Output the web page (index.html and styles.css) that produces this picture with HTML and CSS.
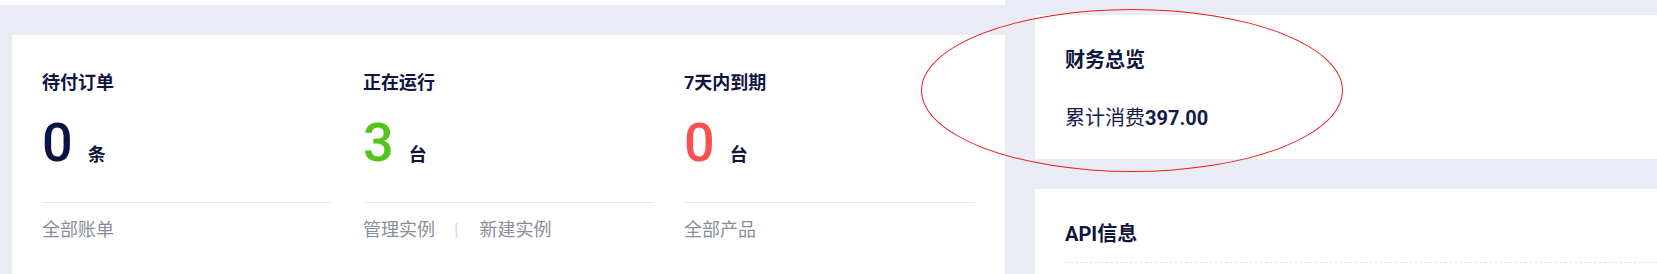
FILE: index.html
```html
<!DOCTYPE html>
<html lang="zh-CN">
<head>
    <meta charset="UTF-8">
    <meta name="viewport" content="width=device-width, initial-scale=1.0">
    <title>控制台概览</title>
    <link rel="stylesheet" href="styles.css">
</head>
<body>
    <div class="page">
        <div class="main">
            <div class="prev-card"></div>

            <div class="card stats">
                <div class="stat">
                    <div class="stat-title">待付订单</div>
                    <div class="stat-value">
                        <span class="num">0</span>
                        <span class="unit">条</span>
                    </div>
                    <div class="stat-links">
                        <a href="#">全部账单</a>
                    </div>
                </div>

                <div class="stat">
                    <div class="stat-title">正在运行</div>
                    <div class="stat-value">
                        <span class="num num-green">3</span>
                        <span class="unit">台</span>
                    </div>
                    <div class="stat-links">
                        <a href="#">管理实例</a>
                        <span class="sep">|</span>
                        <a href="#">新建实例</a>
                    </div>
                </div>

                <div class="stat">
                    <div class="stat-title">7天内到期</div>
                    <div class="stat-value">
                        <span class="num num-red">0</span>
                        <span class="unit">台</span>
                    </div>
                    <div class="stat-links">
                        <a href="#">全部产品</a>
                    </div>
                </div>
            </div>
        </div>

        <div class="side">
            <div class="card finance">
                <div class="card-title">财务总览</div>
                <div class="finance-total">累计消费<b>397.00</b></div>
            </div>

            <div class="card api">
                <div class="card-title api-title">API信息</div>
            </div>
        </div>

        <!-- annotation mark drawn over the finance card -->
        <div class="mark"></div>
    </div>
</body>
</html>
```

FILE: styles.css
```css
body {
    margin: 0;
    font-family: Roboto, "Noto Sans CJK SC", sans-serif;
    background-color: #e9ecf4;
    color: #0f1742;
    overflow: hidden;
}

a {
    color: inherit;
    text-decoration: none;
}

.page {
    position: relative;
    display: grid;
    grid-template-columns: 1005px 1fr;
    column-gap: 30px;
    height: 274px;
}

.card {
    background-color: #fff;
}

.prev-card {
    height: 5px;
    background-color: #fff;
}

/* stats card */

.stats {
    margin: 30px 0 0 12px;
    padding: 36px 30px 0;
    height: 239px;
    box-sizing: border-box;
    display: grid;
    grid-template-columns: repeat(3, 1fr);
    column-gap: 30px;
}

.stat-title {
    font-size: 18px;
    line-height: 24px;
    font-weight: 700;
    color: #0d1540;
}

.stat-value {
    display: flex;
    align-items: baseline;
    gap: 15px;
    margin-top: 21px;
    height: 64px;
}

.num {
    font-size: 54px;
    line-height: 54px;
    font-weight: 500;
    color: #0c1445;
}

.num-green {
    color: #52c41a;
}

.num-red {
    color: #fd4f4f;
}

.unit {
    font-size: 18px;
    font-weight: 700;
    color: #0d1540;
}

.stat-links {
    margin-top: 22px;
    border-top: 1px solid #e7e9ee;
    padding-top: 14px;
    font-size: 18px;
    line-height: 26px;
    color: #8a8e98;
    display: flex;
    align-items: center;
}

.sep {
    color: #d4d8e3;
    margin: 0 21px 0 19px;
}

/* side cards */

.finance {
    margin-top: 15px;
    height: 144px;
    box-sizing: border-box;
    padding: 31px 30px 0;
}

.card-title {
    font-size: 20px;
    line-height: 28px;
    font-weight: 700;
    color: #0d1540;
}

.finance-total {
    margin-top: 30px;
    font-size: 20px;
    line-height: 28px;
    color: #141b48;
}

.finance-total b {
    font-weight: 700;
}

.api {
    margin-top: 30px;
    height: 85px;
    box-sizing: border-box;
    padding: 31px 0 0 30px;
}

.api-title {
    padding-bottom: 14px;
    border-bottom: 1px dashed #e2e5ec;
}

.mark {
    position: absolute;
    left: 921px;
    top: 9px;
    width: 420px;
    height: 161px;
    border: 1px solid #f21d1d;
    border-radius: 50%;
    pointer-events: none;
}
```
